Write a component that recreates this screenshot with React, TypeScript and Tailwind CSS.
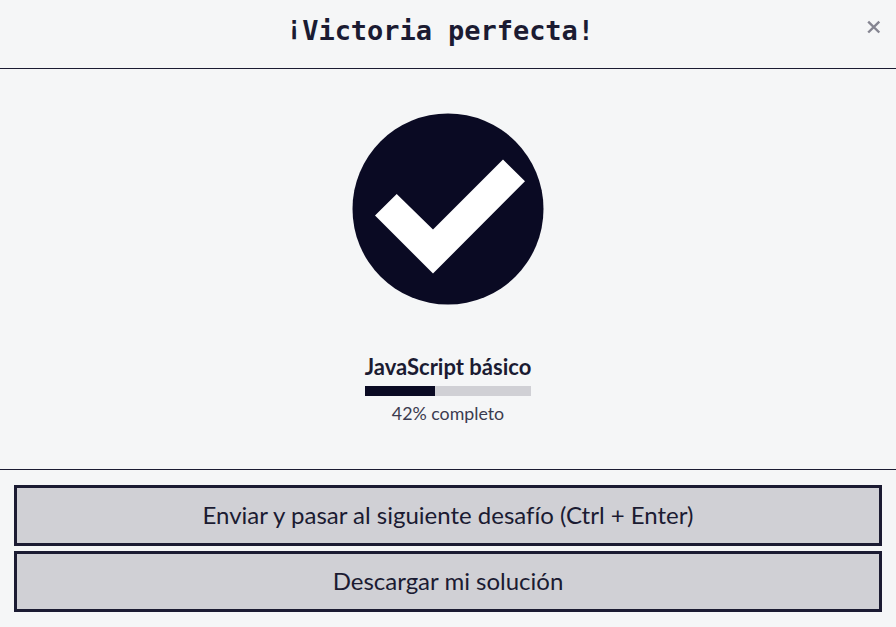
export default function App() {
  return (
    <div className="flex h-[627px] w-[896px] flex-col overflow-hidden bg-[#f5f6f7] font-['Lato',sans-serif] text-[#1b1b32] [font-variant-ligatures:none]">
      <header className="flex h-[69px] shrink-0 border-b border-[#1b1b32]">
        <div className="w-[45px]" />
        <h1 className="flex-1 pt-[12px] pr-[16px] text-center font-['DejaVu_Sans_Mono',monospace] text-[27px] leading-[38px] font-bold tracking-[-0.05px]"><span className="inline-block -translate-y-[5px]">¡</span>Victoria perfecta!</h1>
        <button aria-label="Cerrar" className="flex h-[54px] w-[45px] items-center justify-center text-[#858591]">
          <svg className="h-[14px] w-[14px]" viewBox="0 0 14 14" fill="none" stroke="currentColor" strokeWidth="2.4">
            <path d="M1.200 1.700 12.300 12.500M12.300 1.700 1.200 12.500" />
          </svg>
        </button>
      </header>
      <main className="flex h-[401px] shrink-0 flex-col items-center border-b border-[#1b1b32] pt-[44px]">
        <svg className="h-[192px] w-[192px] shrink-0" viewBox="0 0 192 192">
          <circle cx="96" cy="96" r="95.5" fill="#0a0a23" />
          <path d="M23 102.5 44.700 81 81 116.500 151 46.500 173 68.300 81 160.500Z" fill="#fff" />
        </svg>
        <h2 className="mt-[45px] h-[36px] text-[22px] leading-[34px] font-bold whitespace-nowrap">JavaScript básico</h2>
        <div className="h-[10px] w-[166px] bg-[#d0d0d5]"><div className="h-full w-[42%] bg-[#0a0a23]" /></div>
        <p className="mt-[4px] text-[17.8px] leading-[27px] text-[#3b3b4f]">42% completo</p>
      </main>
      <footer className="flex flex-col gap-[5px] px-[14px] pt-[15px]">
        <button className="h-[61px] border-[3px] border-[#1b1b32] bg-[#d0d0d5] pb-[2px] text-[24px]">Enviar y pasar al siguiente desafío (Ctrl + Enter)</button>
        <button className="h-[61px] border-[3px] border-[#1b1b32] bg-[#d0d0d5] pb-[2px] text-[24px]">Descargar mi solución</button>
      </footer>
    </div>
  );
}
